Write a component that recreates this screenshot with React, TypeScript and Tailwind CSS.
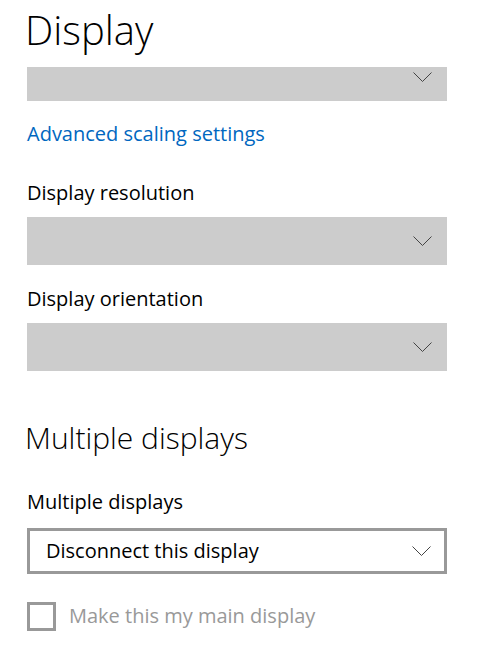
function Chevron() {
  return (
    <svg width="19" height="10" viewBox="0 0 19 10" fill="none" className="shrink-0">
      <polyline points="0.5,0.5 9.5,9.5 18.5,0.5" stroke="#444" strokeWidth="1" />
    </svg>
  );
}

function GrayDropdown({ h = "h-[48px]" }: { h?: string }) {
  return (
    <div className={`${h} w-[420px] bg-[#cccccc] flex items-center justify-end pr-[15px]`}>
      <Chevron />
    </div>
  );
}

export default function App() {
  return (
    <div className="bg-white min-h-[655px] pl-[27px] text-black" style={{ fontFamily: '"Open Sans", "Noto Sans", sans-serif' }}>
      <h1 className="pt-[3px] -ml-[2px] text-[40px] leading-[53px] font-light">Display</h1>
      <div className="mt-[11px] h-[34px] w-[420px] bg-[#cccccc] flex items-start justify-end pr-[15px] pt-[5px]">
        <Chevron />
      </div>
      <a className="block mt-[19px] text-[20px] leading-[28px] text-[#0067c0] w-fit">Advanced scaling settings</a>
      <div className="mt-[31px] text-[20px] leading-[28px]">Display resolution</div>
      <div className="mt-[10px]">
        <GrayDropdown />
      </div>
      <div className="mt-[20px] text-[20px] leading-[28px]">Display orientation</div>
      <div className="mt-[10px]">
        <GrayDropdown />
      </div>
      <h2 className="mt-[47px] -ml-[2px] text-[30px] leading-[40px] font-light">Multiple displays</h2>
      <div className="mt-[30px] text-[20px] leading-[28px]">Multiple displays</div>
      <div className="mt-[12px] h-[46px] w-[420px] border-[3px] border-[#999999] flex items-center justify-between pl-[16px] pr-[13px]">
        <span className="text-[20px] leading-[28px]">Disconnect this display</span>
        <Chevron />
      </div>
      <label className="mt-[28px] flex items-center gap-[13px] w-fit">
        <span className="w-[29px] h-[29px] border-[3px] border-[#999999] shrink-0" />
        <span className="text-[20px] leading-[28px] text-[#999999] -mt-[2px]">Make this my main display</span>
      </label>
    </div>
  );
}
